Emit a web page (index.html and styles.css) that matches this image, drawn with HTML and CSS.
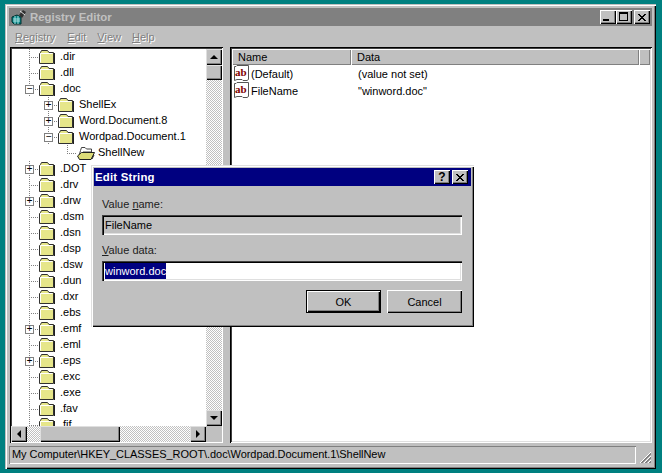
FILE: index.html
```html
<!DOCTYPE html>
<html lang="en">
<head>
<meta charset="utf-8">
<title>Registry Editor</title>
<link rel="stylesheet" href="styles.css">
</head>
<body>
<svg class="defs" width="0" height="0" aria-hidden="true">
  <symbol id="folder" viewBox="0 0 16 14">
    <path d="M1.5 2.5 L2.5 .5 H8.5 L10 2.5 H14.5 V13.5 H.5 V3.5 Z" fill="#e6e68a" stroke="#303030"/>
    <path d="M1.5 3.5 H13.5 M1.5 3.5 V12.5" stroke="#fff"/>
    <path d="M15.5 3 V14" stroke="#202020"/>
  </symbol>
  <symbol id="folder-open" viewBox="0 0 18 14">
    <path d="M3.5 4.5 L4.5 1.5 H8 L9.5 3 H14.5 V6 H6 L2 10 Z" fill="#fff" stroke="#404040"/>
    <path d="M4.5 6.5 H17.5 L14 13.5 H2.5 L.5 10 Z" fill="#dcdc78" stroke="#202020"/>
    <path d="M15 13 L17 9" stroke="#202020"/>
  </symbol>
  <symbol id="ab" viewBox="0 0 16 17">
    <path d="M.5 1.5 H2 L3 .5 H14.5 V14.5 L13 15.5 H9 L8 14.5 H3 L.5 15.5 Z" fill="#fff" stroke="#555"/>
    <text x="1" y="11" class="ab-text">ab</text>
  </symbol>
</svg>

<div class="window">
  <div class="titlebar">
    <svg class="app-icon" width="16" height="16" viewBox="0 0 16 16">
      <path d="M1 8 L6 6 L10 8 L10 15 L3 15 L1 13 Z" fill="#008080" stroke="#003030"/>
      <path d="M2 10 H9 M2 12 H9 M4 7 V15 M7 7 V15" stroke="#a8e0e0"/>
      <path d="M8 6 L12 1 L15 3 L11 9 Z" fill="#303030"/>
      <path d="M9 2 L14 6" stroke="#e0e0e0"/>
    </svg>
    <span class="title-text">Registry Editor</span>
    <div class="win-btns">
      <span class="cap-btn"><i class="g-min"></i></span>
      <span class="cap-btn"><i class="g-max"></i></span>
      <span class="cap-btn gap"><svg width="8" height="7" viewBox="0 0 8 7"><path d="M0 0 L7 7 M1 0 L8 7 M7 0 L0 7 M8 0 L1 7" stroke="#000"/></svg></span>
    </div>
  </div>
  <nav class="menu">
    <span class="m m-registry"><u>R</u>egistry</span>
    <span class="m m-edit"><u>E</u>dit</span>
    <span class="m m-view"><u>V</u>iew</span>
    <span class="m"><u>H</u>elp</span>
  </nav>

  <div class="panes">
    <div class="tree-pane">
      <div class="tree">
        <div class="row"><span class="c"></span><svg class="fo"><use href="#folder"/></svg><span class="lb">.dir</span></div>
        <div class="row"><span class="c"></span><svg class="fo"><use href="#folder"/></svg><span class="lb">.dll</span></div>
        <div class="row"><span class="c"><b class="ex">−</b></span><svg class="fo"><use href="#folder"/></svg><span class="lb">.doc</span></div>
        <div class="row l1"><span class="c"><b class="ex">+</b></span><svg class="fo"><use href="#folder"/></svg><span class="lb">ShellEx</span></div>
        <div class="row l1"><span class="c"><b class="ex">+</b></span><svg class="fo"><use href="#folder"/></svg><span class="lb">Word.Document.8</span></div>
        <div class="row l1"><span class="c"><b class="ex">−</b></span><svg class="fo"><use href="#folder"/></svg><span class="lb">Wordpad.Document.1</span></div>
        <div class="row l2"><span class="c end"></span><svg class="fo open"><use href="#folder-open"/></svg><span class="lb lb-open">ShellNew</span></div>
        <div class="row"><span class="c"><b class="ex">+</b></span><svg class="fo"><use href="#folder"/></svg><span class="lb">.DOT</span></div>
        <div class="row"><span class="c"></span><svg class="fo"><use href="#folder"/></svg><span class="lb">.drv</span></div>
        <div class="row"><span class="c"><b class="ex">+</b></span><svg class="fo"><use href="#folder"/></svg><span class="lb">.drw</span></div>
        <div class="row"><span class="c"></span><svg class="fo"><use href="#folder"/></svg><span class="lb">.dsm</span></div>
        <div class="row"><span class="c"></span><svg class="fo"><use href="#folder"/></svg><span class="lb">.dsn</span></div>
        <div class="row"><span class="c"></span><svg class="fo"><use href="#folder"/></svg><span class="lb">.dsp</span></div>
        <div class="row"><span class="c"></span><svg class="fo"><use href="#folder"/></svg><span class="lb">.dsw</span></div>
        <div class="row"><span class="c"></span><svg class="fo"><use href="#folder"/></svg><span class="lb">.dun</span></div>
        <div class="row"><span class="c"></span><svg class="fo"><use href="#folder"/></svg><span class="lb">.dxr</span></div>
        <div class="row"><span class="c"></span><svg class="fo"><use href="#folder"/></svg><span class="lb">.ebs</span></div>
        <div class="row"><span class="c"><b class="ex">+</b></span><svg class="fo"><use href="#folder"/></svg><span class="lb">.emf</span></div>
        <div class="row"><span class="c"></span><svg class="fo"><use href="#folder"/></svg><span class="lb">.eml</span></div>
        <div class="row"><span class="c"><b class="ex">+</b></span><svg class="fo"><use href="#folder"/></svg><span class="lb">.eps</span></div>
        <div class="row"><span class="c"></span><svg class="fo"><use href="#folder"/></svg><span class="lb">.exc</span></div>
        <div class="row"><span class="c"></span><svg class="fo"><use href="#folder"/></svg><span class="lb">.exe</span></div>
        <div class="row"><span class="c"></span><svg class="fo"><use href="#folder"/></svg><span class="lb">.fav</span></div>
        <div class="row"><span class="c"></span><svg class="fo"><use href="#folder"/></svg><span class="lb">.fif</span></div>
      </div>
      <div class="vbar">
        <span class="sb"><i class="arr up"></i></span>
        <span class="sb thumb-v"></span>
        <span class="track"></span>
        <span class="sb"><i class="arr down"></i></span>
      </div>
      <div class="hbar">
        <span class="sb"><i class="arr left"></i></span>
        <span class="track t-a"></span>
        <span class="sb thumb-h"></span>
        <span class="track"></span>
        <span class="sb"><i class="arr right"></i></span>
      </div>
      <div class="corner"></div>
    </div>

    <div class="list-pane">
      <div class="list-head">
        <span class="h h-name">Name</span>
        <span class="h h-data">Data</span>
        <span class="h h-rest"></span>
      </div>
      <div class="list-row"><svg class="ab"><use href="#ab"/></svg><span class="n">(Default)</span><span class="d">(value not set)</span></div>
      <div class="list-row"><svg class="ab"><use href="#ab"/></svg><span class="n">FileName</span><span class="d">"winword.doc"</span></div>
    </div>
  </div>

  <div class="statusbar">
    <div class="status-text">My Computer\HKEY_CLASSES_ROOT\.doc\Wordpad.Document.1\ShellNew</div>
    <svg class="grip" width="13" height="13" viewBox="0 0 13 13">
      <path d="M12 1 L1 12 M12 5 L5 12 M12 9 L9 12" stroke="#fff"/>
      <path d="M12 2 L2 12 M12 3 L3 12 M12 6 L6 12 M12 7 L7 12 M12 10 L10 12 M12 11 L11 12" stroke="#808080"/>
    </svg>
  </div>
</div>

<div class="dialog">
  <div class="dlg-title">
    <span class="dlg-title-text">Edit String</span>
    <div class="win-btns">
      <span class="cap-btn help">?</span>
      <span class="cap-btn gap"><svg width="8" height="7" viewBox="0 0 8 7"><path d="M0 0 L7 7 M1 0 L8 7 M7 0 L0 7 M8 0 L1 7" stroke="#000"/></svg></span>
    </div>
  </div>
  <div class="dlg-body">
    <div class="dlg-label">Value <u>n</u>ame:</div>
    <div class="field disabled">FileName</div>
    <div class="dlg-label second"><u>V</u>alue data:</div>
    <div class="field"><span class="sel">winword.doc</span></div>
    <div class="dlg-actions">
      <span class="btn default">OK</span>
      <span class="btn">Cancel</span>
    </div>
  </div>
</div>
</body>
</html>
```

FILE: styles.css
```css
* { box-sizing: border-box; }
html, body { margin: 0; height: 100%; }
body {
  width: 662px; height: 473px; overflow: hidden; position: relative;
  background: #008080; padding: 4px 6px 4px 5px;
  font: 11px/16px "Liberation Sans", Arial, sans-serif; color: #000;
}
.defs { position: absolute; }
u { text-decoration: underline; text-underline-offset: 1px; }

.window {
  width: 651px; height: 465px; background: #c0c0c0; padding: 4px 4px 5px 4px;
  display: flex; flex-direction: column;
  box-shadow: inset 1px 1px 0 #c0c0c0, inset 2px 2px 0 #fff, inset -1px -1px 0 #000, inset -2px -2px 0 #808080;
}
.titlebar {
  height: 18px; background: #808080; display: flex; align-items: center;
  padding: 0 2px 0 2px; flex: none;
}
.app-icon { flex: none; margin-right: 3px; }
.title-text { color: #c0c0c0; font-weight: bold; font-size: 11.4px; }
.win-btns { margin-left: auto; display: flex; }
.cap-btn {
  width: 16px; height: 14px; background: #c0c0c0; display: flex; align-items: center; justify-content: center;
  box-shadow: inset 1px 1px 0 #fff, inset -1px -1px 0 #000, inset -2px -2px 0 #808080;
  position: relative;
}
.cap-btn.gap { margin-left: 2px; }
.g-min { width: 6px; height: 2px; background: #000; margin: 6px 4px 0 0; }
.g-max { width: 9px; height: 9px; border: 1px solid #000; border-top-width: 2px; margin: 0 1px 1px 0; }
.help { font-weight: bold; font-size: 12px; line-height: 14px; }

.menu { height: 20px; display: flex; align-items: center; flex: none; padding-left: 6px; margin-top: 1px; }
.m { color: #808080; text-shadow: 1px 1px 0 #fff; }
.m-registry { margin-right: 12px; }
.m-edit { margin-right: 11px; }
.m-view { margin-right: 11px; }

.panes { flex: 1; min-height: 0; display: flex; gap: 7px; padding-left: 1px; }
.tree-pane {
  width: 213px; flex: none; display: grid; grid-template-columns: 1fr 16px; grid-template-rows: 1fr 16px;
  background: #fff; padding: 2px 1px 1px 1px;
  box-shadow: inset 1px 1px 0 #000, inset -1px -1px 0 #fff, inset 2px 2px 0 #404040, inset -2px -2px 0 #dfdfdf;
  min-height: 0;
}
.tree { overflow: hidden; min-height: 0; }
.row { height: 16px; display: flex; align-items: center; white-space: nowrap; padding-left: 9px; }
.row.l1 { padding-left: 28px; }
.row.l2 { padding-left: 47px; }
.c {
  width: 19px; height: 16px; flex: none; display: block; position: relative;
  background:
    repeating-linear-gradient(90deg, #808080 0 1px, transparent 1px 2px) 9px 8px / 10px 1px no-repeat,
    repeating-linear-gradient(180deg, #808080 0 1px, transparent 1px 2px) 9px 0 / 1px 16px no-repeat;
}
.c.end {
  background:
    repeating-linear-gradient(90deg, #808080 0 1px, transparent 1px 2px) 9px 8px / 10px 1px no-repeat,
    repeating-linear-gradient(180deg, #808080 0 1px, transparent 1px 2px) 9px 0 / 1px 8px no-repeat;
}
.ex {
  position: absolute; left: 5px; top: 4px; width: 9px; height: 9px; background: #fff;
  border: 1px solid #808080; font: normal 10px/7px "Liberation Mono", monospace; text-align: center; color: #000;
}
.fo { width: 16px; height: 14px; flex: none; }
.fo.open { width: 18px; }
.lb { margin-left: 5px; position: relative; top: -1px; }
.lb-open { margin-left: 3px; }

.vbar { display: flex; flex-direction: column; grid-column: 2; grid-row: 1; min-height: 0; }
.hbar { display: flex; grid-column: 1; grid-row: 2; }
.corner { background: #c0c0c0; grid-column: 2; grid-row: 2; }
.sb {
  width: 16px; height: 16px; flex: none; background: #c0c0c0; display: flex; align-items: center; justify-content: center;
  box-shadow: inset 1px 1px 0 #dfdfdf, inset -1px -1px 0 #000, inset -2px -2px 0 #808080;
}
.track { flex: 1; background: repeating-conic-gradient(#fff 0 25%, #c0c0c0 0 50%) 0 0 / 2px 2px; }
.t-a { flex: none; width: 13px; }
.thumb-v { height: 15px; }
.thumb-h { width: 80px; }
.arr { width: 0; height: 0; border: 4px solid transparent; display: block; }
.up { border-top: 0; border-bottom-color: #000; }
.down { border-bottom: 0; border-top-color: #000; }
.left { border-left: 0; border-right-color: #000; }
.right { border-right: 0; border-left-color: #000; }

.list-pane {
  flex: 1; background: #fff; padding: 2px;
  box-shadow: inset 1px 1px 0 #000, inset -1px -1px 0 #fff, inset 2px 2px 0 #404040, inset -2px -2px 0 #dfdfdf;
}
.list-head { display: flex; height: 16px; }
.h {
  background: #c0c0c0; padding-left: 6px; line-height: 16px; flex: none;
  box-shadow: inset 1px 1px 0 #fff, inset -1px -1px 0 #808080;
}
.h-name { width: 119px; }
.h-data { width: 288px; }
.h-rest { flex: 1; }
.list-row { height: 17px; display: flex; align-items: center; padding-left: 2px; }
.ab { width: 16px; height: 17px; flex: none; }
.ab-text { font: bold 11px "Liberation Serif", serif; fill: #800000; }
.n { width: 106px; margin-left: 1px; flex: none; }
.d { margin-left: 1px; }

.statusbar { height: 18px; flex: none; margin-top: 3px; display: flex; align-items: flex-end; justify-content: space-between; }
.status-text {
  flex: 1; height: 18px; padding-left: 3px; line-height: 17px; white-space: nowrap; margin-right: 3px; letter-spacing: -.06px;
  box-shadow: inset 1px 1px 0 #808080, inset -1px -1px 0 #fff;
}
.grip { flex: none; }

.dialog {
  position: absolute; left: 91px; top: 165px; width: 383px; height: 162px; background: #c0c0c0; padding: 3px;
  box-shadow: inset 1px 1px 0 #dfdfdf, inset 2px 2px 0 #fff, inset -1px -1px 0 #000, inset -2px -2px 0 #808080;
}
.dlg-title { height: 18px; background: #000080; display: flex; align-items: center; padding: 0 3px 0 1px; }
.dlg-title-text { color: #fff; font-weight: bold; font-size: 11.4px; letter-spacing: .2px; }
.dlg-body { padding: 10px 9px 0 8px; }
.dlg-label { line-height: 16px; color: #202020; }
.second { margin-top: 7px; }
.field {
  height: 20px; margin-top: 3px; background: #fff; line-height: 16px; padding: 2px 3px;
  box-shadow: inset 1px 1px 0 #404040, inset 2px 2px 0 #000, inset -1px -1px 0 #fff, inset -2px -2px 0 #dfdfdf;
}
.field.disabled { background: #c0c0c0; }
.sel { background: #000080; color: #fff; display: inline-block; }
.dlg-actions { display: flex; justify-content: flex-end; gap: 6px; margin-top: 9px; }
.btn {
  width: 75px; height: 23px; background: #c0c0c0; display: flex; align-items: center; justify-content: center;
  box-shadow: inset 1px 1px 0 #fff, inset -1px -1px 0 #000, inset -2px -2px 0 #808080;
}
.btn.default { border: 1px solid #000; }
```
